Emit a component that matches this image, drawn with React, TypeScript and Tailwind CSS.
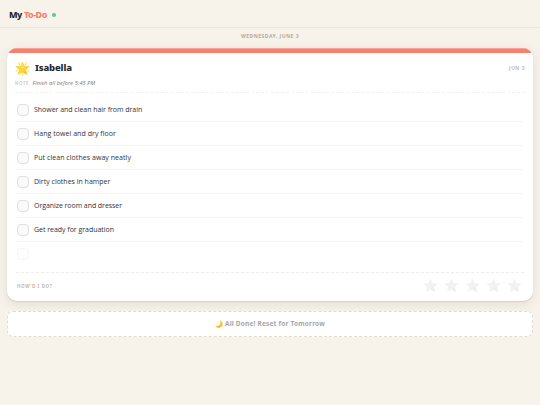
const TASKS = [
  { label: 'Shower and clean hair from drain', tracking: 'tracking-[-0.03px]' },
  { label: 'Hang towel and dry floor', tracking: 'tracking-[0.05px]' },
  { label: 'Put clean clothes away neatly', tracking: 'tracking-[0.05px]' },
  { label: 'Dirty clothes in hamper', tracking: 'tracking-[0px]' },
  { label: 'Organize room and dresser', tracking: 'tracking-[-0.06px]' },
  { label: 'Get ready for graduation', tracking: 'tracking-[-0.03px]' },
];

function GlowingStar() {
  return (
    <svg viewBox="0 0 30 30" className="size-[15px] shrink-0">
      <g stroke="#fbd65c" strokeWidth="2" strokeLinecap="round">
        <path d="M7.5 3.5 9.5 7.5M22.5 3.5 20.5 7.5M2 20.5 5.5 19M28 20.5 24.5 19M15 26V28.5" />
      </g>
      <path
        d="M15 2 18.6 10.2 28.5 11.2 21.3 17.7 23.8 27 15 22.5 6.2 27 8.7 17.7 1.5 11.2 11.4 10.2Z"
        fill="#fcd33a"
        stroke="#fcd33a"
        strokeWidth="1.2"
        strokeLinejoin="round"
      />
      <path d="M15 5 17 11.5 20 13 15 15.5 10 13 13 11.5Z" fill="#fde25a" />
      <path d="M21.3 17.7 23.8 27 15 22.5 19.5 22Z" fill="#f6c234" />
    </svg>
  );
}

function Moon() {
  return (
    <svg viewBox="0 0 24 24" className="size-2 shrink-0">
      <path d="M15 1C25 5 26 18 16 22 10 24.5 4 22 1 17 12 20 19 11 15 1Z" fill="#fcc934" />
      <path d="M1 17C6 21 16 21 20 12 20 17 18 21 15 22.4 9 24 4 22 1 17Z" fill="#f4b53a" />
    </svg>
  );
}

function RatingStar() {
  return (
    <svg viewBox="0 0 24 24" className="size-[15px]">
      <path
        d="M12 1.5 15.2 8.4 22.8 9.3 17.2 14.5 18.7 22 12 18.3 5.3 22 6.8 14.5 1.2 9.3 8.8 8.4Z"
        fill="#f2f2f2"
        stroke="#f2f2f2"
        strokeWidth="0.6"
        strokeLinejoin="round"
      />
      <path d="M17.2 14.5 18.7 22 12 18.3Z" fill="#ededed" />
    </svg>
  );
}

export default function App() {
  return (
    <div className="h-[405px] w-[540px] overflow-hidden bg-[#f7f3eb] font-['Open_Sans',sans-serif] text-[#24272c]">
      <header className="flex h-7 items-center border-b border-[#e8e5de] pt-0.5 pl-[9px] font-['Noto_Sans',sans-serif] text-[9px] leading-3 font-extrabold">
        <span className="tracking-[-0.5px]">My</span>
        <span className="ml-0.5 tracking-[-0.5px] text-[#f87e70]">To-Do</span>
        <span className="mt-px ml-[5px] size-1 rounded-full bg-[#5dc2a0]" />
      </header>

      <div className="flex h-5 items-center justify-center pt-px pb-[5px] font-['Noto_Sans',sans-serif] text-[5px] leading-none font-bold text-[#b5aa9e]">
        <span className="tracking-[0.5px]">WEDNESDAY, JUNE 3</span>
      </div>

      <main className="px-[7px]">
        <section className="h-[253px] overflow-hidden rounded-[10px] bg-white shadow-[0_1px_1px_#d3d0ca,0_3px_12px_rgba(60,55,40,0.11)]">
          <div className="h-[5px] border-t border-[#f9a397] bg-[#f8806f]" />
          <div className="mx-2 h-10 border-b border-dashed border-[#f3f1ef]">
            <div className="flex h-[30px] items-center">
              <GlowingStar />
              <h1 className="ml-[5px] font-['Noto_Sans',sans-serif] text-[9.5px] leading-none font-extrabold tracking-[-0.15px]">Isabella</h1>
              <span className="ml-auto pt-[2px] font-['Noto_Sans',sans-serif] text-[5px] font-semibold tracking-[0.5px] text-[#b9b1aa]">JUN 3</span>
            </div>
            <div className="-mt-[3px] flex h-[7px] items-center leading-none">
              <span className="w-[17.5px] text-[4.5px] font-semibold tracking-[0.45px] text-[#c9bfb5]">NOTE</span>
              <span className="text-[5.5px] font-medium tracking-[0.13px] text-[#777] italic">Finish all before 5:45 PM</span>
            </div>
          </div>

          <ul className="mr-[10px] ml-[9px] pt-[5px]">
            {TASKS.map(({ label, tracking }) => (
              <li key={label} className="flex h-6 items-center border-b border-[#f4f3f2] pl-px">
                <span className="size-3 rounded-[4px] border border-[#e0e0e0] bg-[#fafafa]" />
                <span className={`ml-[5px] text-[7px] leading-none font-medium text-[#30333a] ${tracking}`}>{label}</span>
              </li>
            ))}
            <li className="flex h-6 items-center pl-px">
              <span className="size-3 rounded-[4px] border border-[#f6f6f6] bg-[#fdfdfd]" />
            </li>
          </ul>

          <div className="mx-[9px] mt-[6px] flex h-[27px] items-center border-t border-dashed border-[#efedea]">
            <span className="ml-px font-['Noto_Sans',sans-serif] text-[4.5px] font-bold tracking-[0.6px] text-[#c3b9ac]">HOW'D I DO?</span>
            <div className="mr-[2px] mb-px ml-auto flex gap-1.5">
              {[1, 2, 3, 4, 5].map((n) => (
                <RatingStar key={n} />
              ))}
            </div>
          </div>
        </section>

        <button className="mt-[10px] flex h-[26px] w-full items-center justify-center gap-[2px] rounded-md border border-dashed border-[#e2dbd2] bg-white font-['Noto_Sans',sans-serif] text-[6.5px] leading-none font-bold text-[#a6a6a8]">
          <Moon />
          <span className="tracking-[0.2px]">All Done! Reset for Tomorrow</span>
        </button>
      </main>
    </div>
  );
}
